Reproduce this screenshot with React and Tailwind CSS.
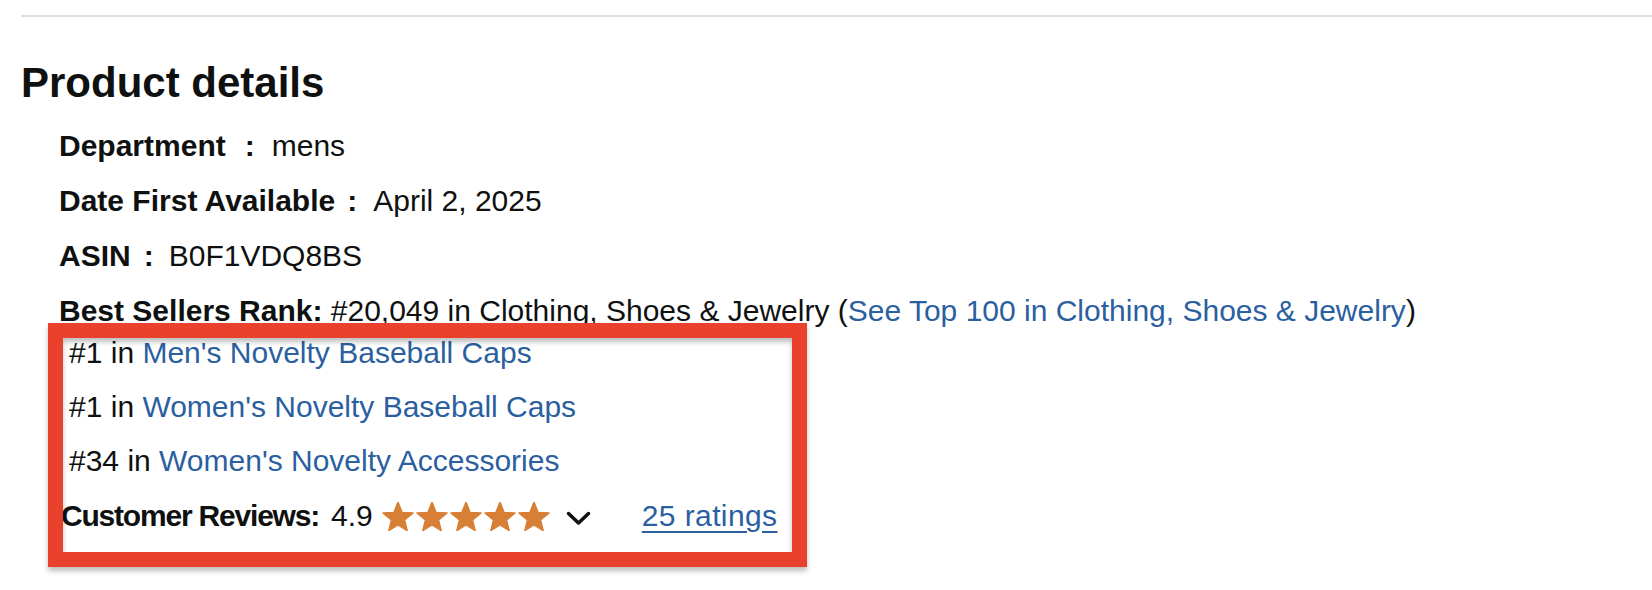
import React from "react";

// Amazon-style "Product details" block, 2x zoomed, with a red annotation box on top
const ROWS = [
  { label: "Department", value: "mens", gap: "ml-[19px] mr-[17px]" },
  { label: "Date First Available", value: "April 2, 2025", gap: "ml-[12px] mr-[16px]" },
  { label: "ASIN", value: "B0F1VDQ8BS", gap: "ml-[13px] mr-[15px]" },
];

const RANKS = [
  { rank: "#1", name: "Men's Novelty Baseball Caps" },
  { rank: "#1", name: "Women's Novelty Baseball Caps" },
  { rank: "#34", name: "Women's Novelty Accessories" },
];

function Star() {
  return (
    <svg width="32" height="29" viewBox="0 0 100 91" className="block">
      <polygon
        points="50,0 62.93,32.2 97.55,34.55 70.92,56.8 79.39,90.45 50,72 20.61,90.45 29.08,56.8 2.45,34.55 37.07,32.2"
        fill="#d77f35"
        stroke="#d77f35"
        strokeWidth="4"
        strokeLinejoin="round"
      />
    </svg>
  );
}

export default function App() {
  return (
    <div
      className="relative w-full h-[590px] bg-white overflow-hidden text-[#0f1111] pl-[21px] pt-[15px]"
      style={{ fontFamily: '"Liberation Sans", Arial, sans-serif' }}
    >
      <div className="h-[2px] bg-[#dedede]" />

      <h2 className="mt-[41px] text-[42px] leading-[50px] font-bold">Product details</h2>

      <ul className="mt-[18px] ml-[38px] flex flex-col text-[30px] leading-[40px]">
        {ROWS.map((r) => (
          <li key={r.label} className="mb-[15px] whitespace-nowrap">
            <span className="font-bold">
              {r.label}
              <span className={r.gap}>:</span>
            </span>
            <span>{r.value}</span>
          </li>
        ))}

        <li className="whitespace-nowrap">
          <div>
            <span className="font-bold">Best Sellers Rank:</span> #20,049 in Clothing, Shoes &amp; Jewelry (
            <a className="text-[#2b5f9f]">See Top 100 in Clothing, Shoes &amp; Jewelry</a>)
          </div>
          <ul className="mt-[2px] ml-[10px] flex flex-col gap-[14px]">
            {RANKS.map((r) => (
              <li key={r.name}>
                {r.rank} in <a className="text-[#2b5f9f]">{r.name}</a>
              </li>
            ))}
          </ul>
        </li>

        <li className="mt-[15px] ml-[2px] flex items-center whitespace-nowrap">
          <span className="font-bold tracking-[-1.2px]">Customer Reviews:</span>
          <span className="ml-[12px]">4.9</span>
          <div className="ml-[9px] flex gap-[2px]">
            {[0, 1, 2, 3, 4].map((i) => (
              <Star key={i} />
            ))}
          </div>
          <svg width="25" height="15" viewBox="0 0 25 15" className="ml-[16px] mt-[4px]">
            <polyline points="2.5,2.5 12.5,12 22.5,2.5" fill="none" stroke="#111" strokeWidth="3.5" strokeLinecap="round" strokeLinejoin="round" />
          </svg>
          <a className="ml-[51px] text-[#2b5f9f] tracking-[0.4px] underline underline-offset-[5px] decoration-[2px]">25 ratings</a>
        </li>
      </ul>

      {/* red annotation frame laid over the rank list */}
      <div className="absolute left-[48px] top-[323px] w-[759px] h-[244px] border-[15px] border-[#e9412b] shadow-[0_4px_5px_rgba(0,0,0,0.25),inset_0_4px_5px_rgba(0,0,0,0.25)]" />
    </div>
  );
}
